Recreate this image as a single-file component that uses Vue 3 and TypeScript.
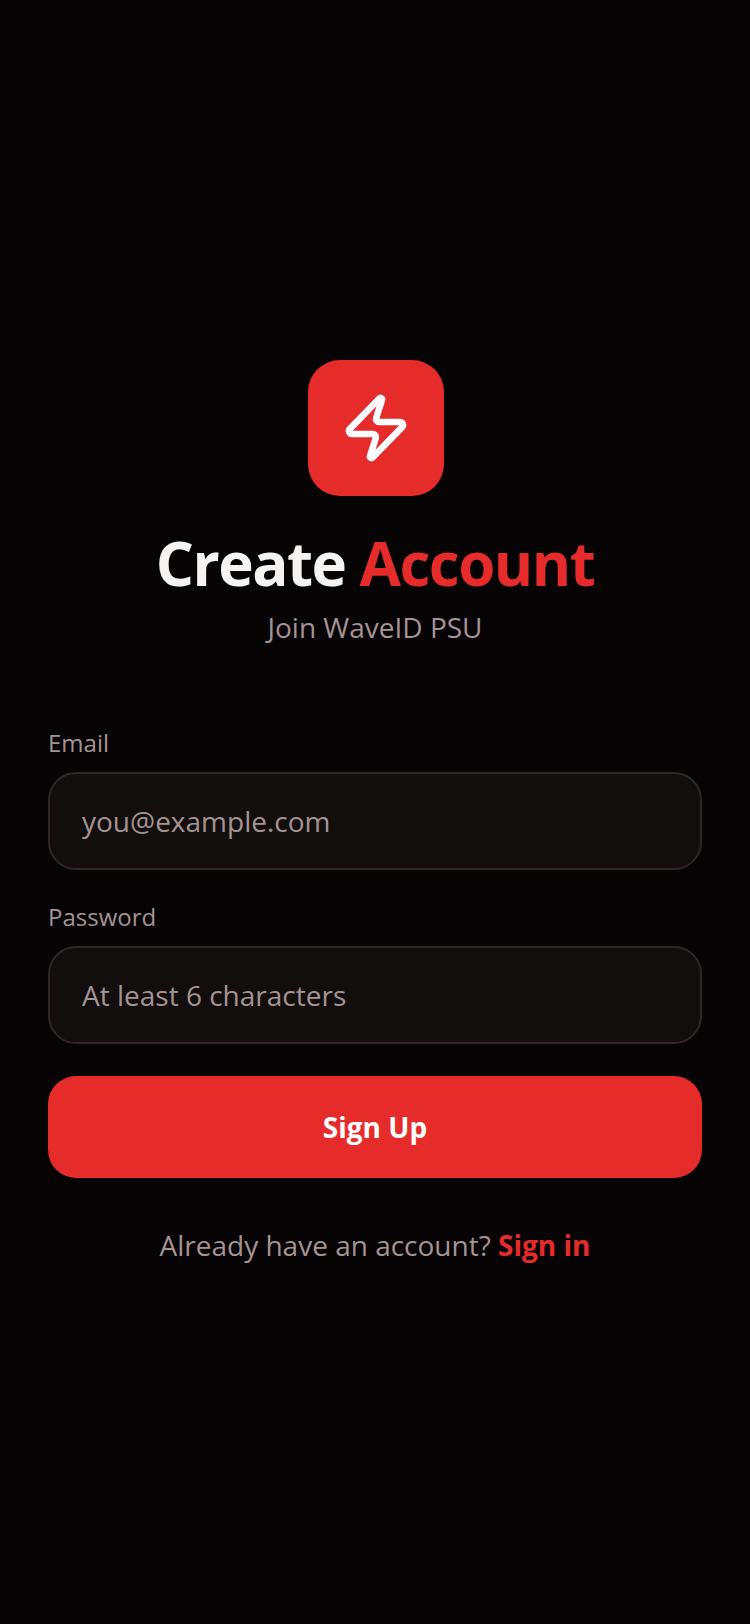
<script setup lang="ts">
import { ref } from 'vue'

const email = ref('')
const password = ref('')
</script>

<template>
  <main class="screen">
    <div class="logo">
      <svg xmlns="http://www.w3.org/2000/svg" width="72" height="72" viewBox="0 0 24 24" fill="none" stroke="currentColor" stroke-width="2.2" stroke-linecap="round" stroke-linejoin="round"><path d="M4 14a1 1 0 0 1-.78-1.63l9.9-10.2a.5.5 0 0 1 .86.46l-1.92 6.02A1 1 0 0 0 13 10h7a1 1 0 0 1 .78 1.63l-9.9 10.2a.5.5 0 0 1-.86-.46l1.92-6.02A1 1 0 0 0 11 14z"/></svg>
    </div>
    <h1 class="title">Create <span class="accent">Account</span></h1>
    <p class="subtitle">Join WaveID PSU</p>

    <form class="form" @submit.prevent>
      <label class="field">
        <span class="label">Email</span>
        <input v-model="email" class="input" type="email" placeholder="you@example.com" />
      </label>
      <label class="field">
        <span class="label">Password</span>
        <input v-model="password" class="input" type="password" placeholder="At least 6 characters" />
      </label>
      <button class="submit" type="submit">Sign Up</button>
    </form>

    <p class="footer">Already have an account? <a class="link" href="#">Sign in</a></p>
  </main>
</template>

<style>
html, body {
  margin: 0;
  background: #060405;
}
</style>

<style scoped>
.screen {
  box-sizing: border-box;
  min-height: 1624px;
  padding: 1px 48px 0;
  display: flex;
  flex-direction: column;
  align-items: center;
  justify-content: center;
  background: #060405;
  font-family: "Open Sans", "Noto Sans", sans-serif;
  color: #a59393;
}

.logo {
  width: 136px;
  height: 136px;
  margin-left: 2px;
  border-radius: 32px;
  background: #e62b2b;
  color: #fff;
  display: flex;
  align-items: center;
  justify-content: center;
}

.title {
  margin: 29px 0 0;
  font-size: 60px;
  line-height: 76px;
  font-weight: 700;
  color: #f7f3f2;
  letter-spacing: -1.5px;
}

.accent,
.link {
  color: #e62b2b;
}

.subtitle {
  margin: 8px 0 0;
  font-size: 28px;
  line-height: 36px;
}

.form {
  width: 100%;
  margin-top: 83px;
  display: flex;
  flex-direction: column;
}

.field {
  display: flex;
  flex-direction: column;
  margin-bottom: 32px;
}

.label {
  font-size: 24px;
  line-height: 30px;
  margin-bottom: 14px;
}

.input {
  box-sizing: border-box;
  width: 100%;
  height: 98px;
  padding: 0 32px;
  border: 2px solid #322626;
  border-radius: 28px;
  background: #130e0e;
  color: #f7f3f2;
  font: inherit;
  font-size: 28px;
  outline: none;
}

.input::placeholder {
  color: #a59393;
  opacity: 1;
}

.submit {
  height: 102px;
  border: 0;
  border-radius: 28px;
  background: #e62b2b;
  color: #fff;
  font: inherit;
  font-size: 28px;
  font-weight: 700;
}

.footer {
  margin: 47px 0 0;
  font-size: 28px;
  line-height: 40px;
}

.link {
  font-weight: 700;
  text-decoration: none;
}
</style>
